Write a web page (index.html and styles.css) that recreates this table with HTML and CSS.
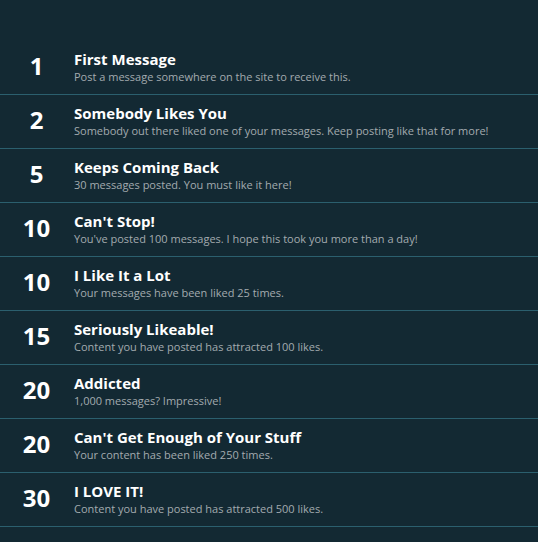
FILE: index.html
```html
<!DOCTYPE html>
<html lang="en">
<head>
<meta charset="utf-8">
<title>Trophies</title>
<link rel="stylesheet" href="styles.css">
</head>
<body>
<ol class="trophies">
  <li class="trophy"><span class="points">1</span><div class="info"><h3 class="title">First Message</h3><p class="desc">Post a message somewhere on the site to receive this.</p></div></li>
  <li class="trophy"><span class="points">2</span><div class="info"><h3 class="title">Somebody Likes You</h3><p class="desc">Somebody out there liked one of your messages. Keep posting like that for more!</p></div></li>
  <li class="trophy"><span class="points">5</span><div class="info"><h3 class="title">Keeps Coming Back</h3><p class="desc">30 messages posted. You must like it here!</p></div></li>
  <li class="trophy"><span class="points">10</span><div class="info"><h3 class="title">Can't Stop!</h3><p class="desc">You've posted 100 messages. I hope this took you more than a day!</p></div></li>
  <li class="trophy"><span class="points">10</span><div class="info"><h3 class="title">I Like It a Lot</h3><p class="desc">Your messages have been liked 25 times.</p></div></li>
  <li class="trophy"><span class="points">15</span><div class="info"><h3 class="title">Seriously Likeable!</h3><p class="desc">Content you have posted has attracted 100 likes.</p></div></li>
  <li class="trophy"><span class="points">20</span><div class="info"><h3 class="title">Addicted</h3><p class="desc">1,000 messages? Impressive!</p></div></li>
  <li class="trophy"><span class="points">20</span><div class="info"><h3 class="title">Can't Get Enough of Your Stuff</h3><p class="desc">Your content has been liked 250 times.</p></div></li>
  <li class="trophy"><span class="points">30</span><div class="info"><h3 class="title">I LOVE IT!</h3><p class="desc">Content you have posted has attracted 500 likes.</p></div></li>
</ol>
</body>
</html>
```
FILE: styles.css
```css
html, body {
  margin: 0;
  padding: 0;
  background: #132933;
}
body {
  padding-top: 41px;
  font-family: "Open Sans", "Liberation Sans", sans-serif;
  color: #ffffff;
}
.trophies {
  list-style: none;
  margin: 0;
  padding: 0;
}
.trophy {
  display: flex;
  align-items: center;
  padding: 8px 0 10px;
  border-bottom: 1px solid #2b5f6e;
}
.points {
  width: 73px;
  flex: none;
  text-align: center;
  font-size: 24px;
  font-weight: 700;
  line-height: 24px;
  margin-top: -2px;
}
.info {
  margin-left: 1px;
  min-width: 0;
}
.title {
  margin: 0;
  font-size: 15px;
  line-height: 20px;
  font-weight: 700;
  color: #ffffff;
}
.desc {
  margin: 0;
  font-size: 11px;
  line-height: 15px;
  color: #a3abaf;
}
```
